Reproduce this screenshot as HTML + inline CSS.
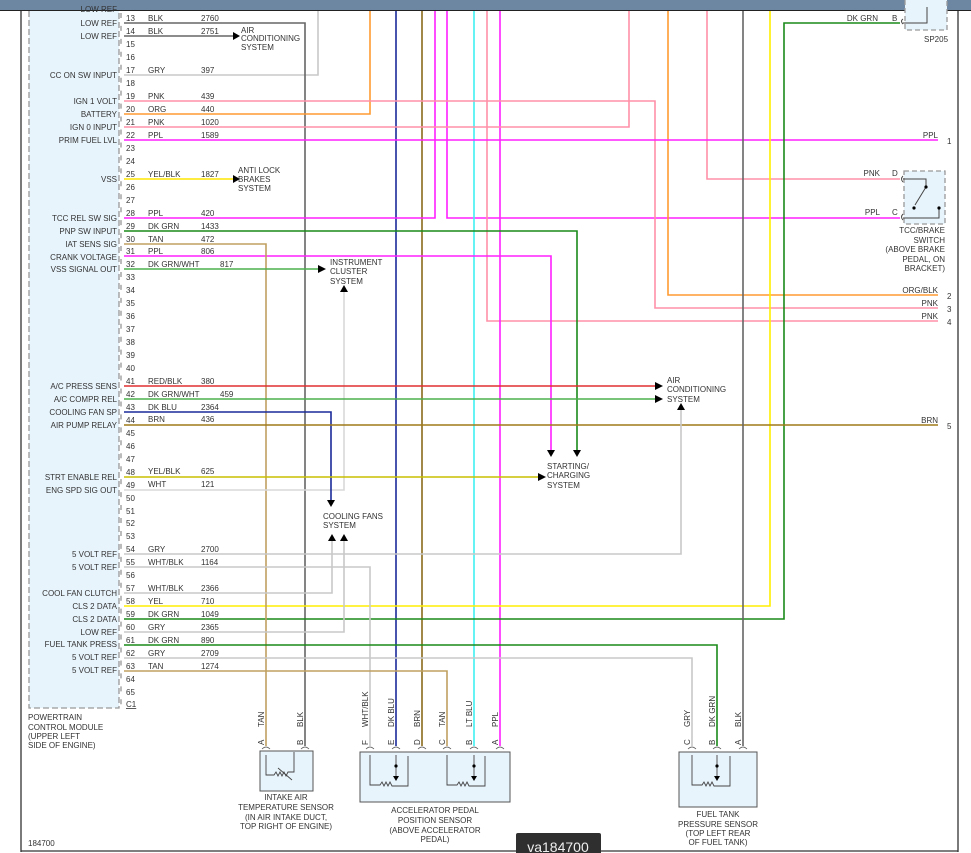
<!DOCTYPE html>
<html><head><meta charset="utf-8"><style>
html,body{margin:0;padding:0;background:#fff;}
svg{display:block;}
text{font-family:"Liberation Sans",sans-serif;font-size:8px;fill:#333;}
.r{text-anchor:end;}
.m{text-anchor:middle;}
</style></head><body>
<svg width="971" height="853" viewBox="0 0 971 853" xmlns="http://www.w3.org/2000/svg">
<rect x="0" y="0" width="971" height="853" fill="#fff"/>
<!-- module -->
<rect x="29" y="-5" width="90" height="713" fill="#e8f4fc" stroke="#999" stroke-width="1.3" stroke-dasharray="6 3"/>
<line x1="121" y1="0" x2="121" y2="708" stroke="#777" stroke-width="1" stroke-dasharray="5 7.95"/>
<!-- frame -->
<line x1="21" y1="0" x2="21" y2="852" stroke="#333" stroke-width="1.3"/>
<line x1="21" y1="851" x2="958" y2="851" stroke="#333" stroke-width="1.3"/>
<line x1="958" y1="0" x2="958" y2="852" stroke="#333" stroke-width="1.3"/>

<g fill="none" stroke-width="1.6">
<!-- verticals from top -->
<polyline points="124,75 318,75 318,0" stroke="#c8c8c8"/>
<polyline points="124,23 305,23 305,746" stroke="#666"/>
<polyline points="124,36 233,36" stroke="#666"/>
<polyline points="124,114 370,114 370,0" stroke="#ff9a30"/>
<line x1="396" y1="0" x2="396" y2="746" stroke="#1a2a9a"/>
<line x1="422" y1="0" x2="422" y2="746" stroke="#8b6a1a"/>
<polyline points="124,218 435,218 435,0" stroke="#ff20ff"/>
<polyline points="447,0 447,218 900,218" stroke="#ff20ff"/>
<line x1="474" y1="0" x2="474" y2="746" stroke="#40f0f0"/>
<polyline points="487,0 487,321 938,321" stroke="#ff90a8"/>
<line x1="500" y1="0" x2="500" y2="746" stroke="#ff20ff"/>
<polyline points="124,101 655,101 655,308 938,308" stroke="#ff90a8"/>
<polyline points="124,127 629,127 629,0" stroke="#ff90a8"/>
<polyline points="668,0 668,295 938,295" stroke="#ff9a30"/>
<polyline points="707,0 707,179 900,179" stroke="#ff90a8"/>
<polyline points="124,140 938,140" stroke="#ff20ff"/>
<polyline points="770,0 770,606 124,606" stroke="#ffee00"/>
<polyline points="900,23 784,23 784,619 124,619" stroke="#1a8a1a"/>
<polyline points="124,179 233,179" stroke="#ffe600"/>
<polyline points="124,231 577,231 577,450" stroke="#1a8a1a"/>
<polyline points="124,256 551,256 551,450" stroke="#ff20ff"/>
<polyline points="124,244 266,244 266,746" stroke="#c0a060"/>
<polyline points="124,269 323,269" stroke="#4cb04c"/>
<polyline points="124,490 344,490 344,292" stroke="#d8d8d8"/>
<polyline points="124,386 658,386" stroke="#e03030"/>
<polyline points="124,399 658,399" stroke="#4cb04c"/>
<polyline points="124,412 331,412 331,500" stroke="#1a2a9a"/>
<polyline points="124,425 938,425" stroke="#a07a1a"/>
<polyline points="124,477 540,477" stroke="#c8c000"/>
<polyline points="124,554 681,554 681,410" stroke="#c8c8c8"/>
<polyline points="124,567 370,567 370,746" stroke="#c8c8c8"/>
<polyline points="124,593 332,593 332,538" stroke="#c8c8c8"/>
<polyline points="124,632 344,632 344,538" stroke="#c8c8c8"/>
<polyline points="124,645 717,645 717,746" stroke="#1a8a1a"/>
<polyline points="124,658 692,658 692,746" stroke="#c8c8c8"/>
<polyline points="124,671 447,671 447,746" stroke="#c0a060"/>
<line x1="743" y1="0" x2="743" y2="746" stroke="#666"/>
</g>

<!-- arrows -->
<g fill="#000">
<polygon points="233,32 240,36 233,40"/>
<polygon points="233,175 240,179 233,183"/>
<polygon points="318,265 326,269 318,273"/>
<polygon points="340,292 348,292 344,285"/>
<polygon points="655,382 663,386 655,390"/>
<polygon points="655,395 663,399 655,403"/>
<polygon points="677,410 685,410 681,403"/>
<polygon points="547,450 555,450 551,457"/>
<polygon points="573,450 581,450 577,457"/>
<polygon points="538,473 546,477 538,481"/>
<polygon points="327,500 335,500 331,507"/>
<polygon points="328,541 336,541 332,534"/>
<polygon points="340,541 348,541 344,534"/>
</g>

<!-- header bar -->
<rect x="0" y="0" width="971" height="10" fill="#6d87a3"/>
<line x1="0" y1="10.5" x2="971" y2="10.5" stroke="#222" stroke-width="1"/>

<!-- system labels -->
<text x="241" y="33">AIR</text><text x="241" y="41">CONDITIONING</text><text x="241" y="50">SYSTEM</text>
<text x="238" y="173">ANTI LOCK</text><text x="238" y="182">BRAKES</text><text x="238" y="191">SYSTEM</text>
<text x="330" y="265">INSTRUMENT</text><text x="330" y="274">CLUSTER</text><text x="330" y="284">SYSTEM</text>
<text x="667" y="383">AIR</text><text x="667" y="392">CONDITIONING</text><text x="667" y="402">SYSTEM</text>
<text x="547" y="469">STARTING/</text><text x="547" y="478">CHARGING</text><text x="547" y="488">SYSTEM</text>
<text x="323" y="519">COOLING FANS</text><text x="323" y="528">SYSTEM</text>

<!-- pin labels -->
<g class="r">
<text class="r" x="117" y="12">LOW REF</text>
<text class="r" x="117" y="26">LOW REF</text>
<text class="r" x="117" y="39">LOW REF</text>
<text class="r" x="117" y="78">CC ON SW INPUT</text>
<text class="r" x="117" y="104">IGN 1 VOLT</text>
<text class="r" x="117" y="117">BATTERY</text>
<text class="r" x="117" y="130">IGN 0 INPUT</text>
<text class="r" x="117" y="143">PRIM FUEL LVL</text>
<text class="r" x="117" y="182">VSS</text>
<text class="r" x="117" y="221">TCC REL SW SIG</text>
<text class="r" x="117" y="234">PNP SW INPUT</text>
<text class="r" x="117" y="247">IAT SENS SIG</text>
<text class="r" x="117" y="260">CRANK VOLTAGE</text>
<text class="r" x="117" y="272">VSS SIGNAL OUT</text>
<text class="r" x="117" y="389">A/C PRESS SENS</text>
<text class="r" x="117" y="402">A/C COMPR REL</text>
<text class="r" x="117" y="415">COOLING FAN SP</text>
<text class="r" x="117" y="428">AIR PUMP RELAY</text>
<text class="r" x="117" y="480">STRT ENABLE REL</text>
<text class="r" x="117" y="493">ENG SPD SIG OUT</text>
<text class="r" x="117" y="557">5 VOLT REF</text>
<text class="r" x="117" y="570">5 VOLT REF</text>
<text class="r" x="117" y="596">COOL FAN CLUTCH</text>
<text class="r" x="117" y="609">CLS 2 DATA</text>
<text class="r" x="117" y="622">CLS 2 DATA</text>
<text class="r" x="117" y="635">LOW REF</text>
<text class="r" x="117" y="647">FUEL TANK PRESS</text>
<text class="r" x="117" y="660">5 VOLT REF</text>
<text class="r" x="117" y="673">5 VOLT REF</text>
</g>

<!-- pin numbers -->
<g>
<text x="126" y="21">13</text><text x="126" y="34">14</text><text x="126" y="47">15</text><text x="126" y="60">16</text><text x="126" y="73">17</text><text x="126" y="86">18</text><text x="126" y="99">19</text><text x="126" y="112">20</text><text x="126" y="125">21</text><text x="126" y="138">22</text><text x="126" y="151">23</text><text x="126" y="164">24</text><text x="126" y="177">25</text><text x="126" y="190">26</text><text x="126" y="203">27</text><text x="126" y="216">28</text><text x="126" y="229">29</text><text x="126" y="242">30</text><text x="126" y="254">31</text><text x="126" y="267">32</text><text x="126" y="280">33</text><text x="126" y="293">34</text><text x="126" y="306">35</text><text x="126" y="319">36</text><text x="126" y="332">37</text><text x="126" y="345">38</text><text x="126" y="358">39</text><text x="126" y="371">40</text><text x="126" y="384">41</text><text x="126" y="397">42</text><text x="126" y="410">43</text><text x="126" y="423">44</text><text x="126" y="436">45</text><text x="126" y="449">46</text><text x="126" y="462">47</text><text x="126" y="475">48</text><text x="126" y="488">49</text><text x="126" y="501">50</text><text x="126" y="514">51</text><text x="126" y="526">52</text><text x="126" y="539">53</text><text x="126" y="552">54</text><text x="126" y="565">55</text><text x="126" y="578">56</text><text x="126" y="591">57</text><text x="126" y="604">58</text><text x="126" y="617">59</text><text x="126" y="630">60</text><text x="126" y="643">61</text><text x="126" y="656">62</text><text x="126" y="669">63</text><text x="126" y="682">64</text><text x="126" y="695">65</text><text x="126" y="707" text-decoration="underline">C1</text>
</g>

<!-- wire colors & circuits -->
<g>
<text x="148" y="21">BLK</text><text x="201" y="21">2760</text>
<text x="148" y="34">BLK</text><text x="201" y="34">2751</text>
<text x="148" y="73">GRY</text><text x="201" y="73">397</text>
<text x="148" y="99">PNK</text><text x="201" y="99">439</text>
<text x="148" y="112">ORG</text><text x="201" y="112">440</text>
<text x="148" y="125">PNK</text><text x="201" y="125">1020</text>
<text x="148" y="138">PPL</text><text x="201" y="138">1589</text>
<text x="148" y="177">YEL/BLK</text><text x="201" y="177">1827</text>
<text x="148" y="216">PPL</text><text x="201" y="216">420</text>
<text x="148" y="229">DK GRN</text><text x="201" y="229">1433</text>
<text x="148" y="242">TAN</text><text x="201" y="242">472</text>
<text x="148" y="254">PPL</text><text x="201" y="254">806</text>
<text x="148" y="267">DK GRN/WHT</text><text x="220" y="267">817</text>
<text x="148" y="384">RED/BLK</text><text x="201" y="384">380</text>
<text x="148" y="397">DK GRN/WHT</text><text x="220" y="397">459</text>
<text x="148" y="410">DK BLU</text><text x="201" y="410">2364</text>
<text x="148" y="422">BRN</text><text x="201" y="422">436</text>
<text x="148" y="474">YEL/BLK</text><text x="201" y="474">625</text>
<text x="148" y="487">WHT</text><text x="201" y="487">121</text>
<text x="148" y="552">GRY</text><text x="201" y="552">2700</text>
<text x="148" y="565">WHT/BLK</text><text x="201" y="565">1164</text>
<text x="148" y="591">WHT/BLK</text><text x="201" y="591">2366</text>
<text x="148" y="604">YEL</text><text x="201" y="604">710</text>
<text x="148" y="617">DK GRN</text><text x="201" y="617">1049</text>
<text x="148" y="630">GRY</text><text x="201" y="630">2365</text>
<text x="148" y="643">DK GRN</text><text x="201" y="643">890</text>
<text x="148" y="656">GRY</text><text x="201" y="656">2709</text>
<text x="148" y="669">TAN</text><text x="201" y="669">1274</text>
</g>

<!-- right side labels -->
<text class="r" x="938" y="138">PPL</text><text x="947" y="144">1</text>
<text class="r" x="938" y="293">ORG/BLK</text><text x="947" y="299">2</text>
<text class="r" x="938" y="306">PNK</text><text x="947" y="312">3</text>
<text class="r" x="938" y="319">PNK</text><text x="947" y="325">4</text>
<text class="r" x="938" y="423">BRN</text><text x="947" y="429">5</text>
<text class="r" x="878" y="21">DK GRN</text><text x="892" y="21">B</text>
<text class="r" x="880" y="176">PNK</text><text x="892" y="176">D</text>
<text class="r" x="880" y="215">PPL</text><text x="892" y="215">C</text>

<!-- SP205 -->
<rect x="905" y="-5" width="42" height="35" fill="#e8f4fc" stroke="#999" stroke-width="1.3" stroke-dasharray="5 3"/>
<path d="M903 19 q-3 2 0 5 M903 23 h24 v-16" fill="none" stroke="#444" stroke-width="1"/>
<text x="924" y="42">SP205</text>
<!-- TCC switch -->
<rect x="904" y="171" width="41" height="53" fill="#e8f4fc" stroke="#999" stroke-width="1.3" stroke-dasharray="5 3"/>
<path d="M903 176 q-3 3 0 6 M903 179 h23 v8 M926 187 l-11 18 M903 214 q-3 3 0 6 M903 218 h36 v-10" fill="none" stroke="#444" stroke-width="1"/>
<circle cx="926" cy="187" r="1.6" fill="#000"/><circle cx="914" cy="208" r="1.6" fill="#000"/><circle cx="939" cy="208" r="1.6" fill="#000"/>
<text class="r" x="945" y="233">TCC/BRAKE</text>
<text class="r" x="945" y="243">SWITCH</text>
<text class="r" x="945" y="252">(ABOVE BRAKE</text>
<text class="r" x="945" y="262">PEDAL, ON</text>
<text class="r" x="945" y="271">BRACKET)</text>

<!-- module caption -->
<text x="28" y="720">POWERTRAIN</text>
<text x="28" y="730">CONTROL MODULE</text>
<text x="28" y="739">(UPPER LEFT</text>
<text x="28" y="748">SIDE OF ENGINE)</text>
<text x="28" y="846">184700</text>

<!-- IAT -->
<rect x="260" y="751" width="53" height="40" fill="#e8f4fc" stroke="#555" stroke-width="1"/>
<path d="M266 755 v20 h8 l2 -3 l2 4 l2 -4 l2 4 l2 -4 l2 4 l2 -4 h6 v-20" fill="none" stroke="#444" stroke-width="0.9"/>
<line x1="278" y1="768" x2="292" y2="780" stroke="#444" stroke-width="0.9"/>
<text class="m" x="286" y="800">INTAKE AIR</text>
<text class="m" x="286" y="810">TEMPERATURE SENSOR</text>
<text class="m" x="286" y="820">(IN AIR INTAKE DUCT,</text>
<text class="m" x="286" y="829">TOP RIGHT OF ENGINE)</text>

<!-- APP -->
<rect x="360" y="752" width="150" height="50" fill="#e8f4fc" stroke="#555" stroke-width="1"/>
<path d="M370 755 v30 h10 l2 -3 l2 4 l2 -4 l2 4 l2 -4 l2 4 h16 v-30 M396 755 v22 M447 755 v30 h10 l2 -3 l2 4 l2 -4 l2 4 l2 -4 l2 4 h16 v-30 M474 755 v22" fill="none" stroke="#444" stroke-width="0.9"/>
<circle cx="396" cy="766" r="1.6" fill="#000"/><circle cx="474" cy="766" r="1.6" fill="#000"/>
<polygon points="393,776 399,776 396,781" fill="#000"/><polygon points="471,776 477,776 474,781" fill="#000"/>
<text class="m" x="435" y="813">ACCELERATOR PEDAL</text>
<text class="m" x="435" y="823">POSITION SENSOR</text>
<text class="m" x="435" y="833">(ABOVE ACCELERATOR</text>
<text class="m" x="435" y="842">PEDAL)</text>

<!-- Fuel tank -->
<rect x="679" y="752" width="78" height="55" fill="#e8f4fc" stroke="#555" stroke-width="1"/>
<path d="M692 755 v30 h10 l2 -3 l2 4 l2 -4 l2 4 l2 -4 l2 4 h16 v-30 M717 755 v22" fill="none" stroke="#444" stroke-width="0.9"/>
<circle cx="717" cy="766" r="1.6" fill="#000"/><polygon points="714,776 720,776 717,781" fill="#000"/>
<text class="m" x="718" y="817">FUEL TANK</text>
<text class="m" x="718" y="827">PRESSURE SENSOR</text>
<text class="m" x="718" y="836">(TOP LEFT REAR</text>
<text class="m" x="718" y="845">OF FUEL TANK)</text>

<!-- connector pin letters & rotated wire labels -->
<g>
<text x="0" y="0" transform="translate(264,745) rotate(-90)">A</text>
<text x="0" y="0" transform="translate(303,745) rotate(-90)">B</text>
<text x="0" y="0" transform="translate(368,745) rotate(-90)">F</text>
<text x="0" y="0" transform="translate(394,745) rotate(-90)">E</text>
<text x="0" y="0" transform="translate(420,745) rotate(-90)">D</text>
<text x="0" y="0" transform="translate(445,745) rotate(-90)">C</text>
<text x="0" y="0" transform="translate(472,745) rotate(-90)">B</text>
<text x="0" y="0" transform="translate(498,745) rotate(-90)">A</text>
<text x="0" y="0" transform="translate(690,745) rotate(-90)">C</text>
<text x="0" y="0" transform="translate(715,745) rotate(-90)">B</text>
<text x="0" y="0" transform="translate(741,745) rotate(-90)">A</text>
<text x="0" y="0" transform="translate(264,727) rotate(-90)">TAN</text>
<text x="0" y="0" transform="translate(303,727) rotate(-90)">BLK</text>
<text x="0" y="0" transform="translate(368,727) rotate(-90)">WHT/BLK</text>
<text x="0" y="0" transform="translate(394,727) rotate(-90)">DK BLU</text>
<text x="0" y="0" transform="translate(420,727) rotate(-90)">BRN</text>
<text x="0" y="0" transform="translate(445,727) rotate(-90)">TAN</text>
<text x="0" y="0" transform="translate(472,727) rotate(-90)">LT BLU</text>
<text x="0" y="0" transform="translate(498,727) rotate(-90)">PPL</text>
<text x="0" y="0" transform="translate(690,727) rotate(-90)">GRY</text>
<text x="0" y="0" transform="translate(715,727) rotate(-90)">DK GRN</text>
<text x="0" y="0" transform="translate(741,727) rotate(-90)">BLK</text>
</g>
<g fill="none" stroke="#555" stroke-width="0.8">
<path d="M262 749 q4 -4 8 0 M301 749 q4 -4 8 0 M366 749 q4 -4 8 0 M392 749 q4 -4 8 0 M418 749 q4 -4 8 0 M443 749 q4 -4 8 0 M470 749 q4 -4 8 0 M496 749 q4 -4 8 0 M688 749 q4 -4 8 0 M713 749 q4 -4 8 0 M739 749 q4 -4 8 0"/>
</g>

<!-- watermark -->
<rect x="516" y="833" width="85" height="22" rx="2" fill="#2f2f2f"/>
<text x="558" y="852" class="m" style="font-size:14px;fill:#eee;">va184700</text>
</svg>
</body></html>
